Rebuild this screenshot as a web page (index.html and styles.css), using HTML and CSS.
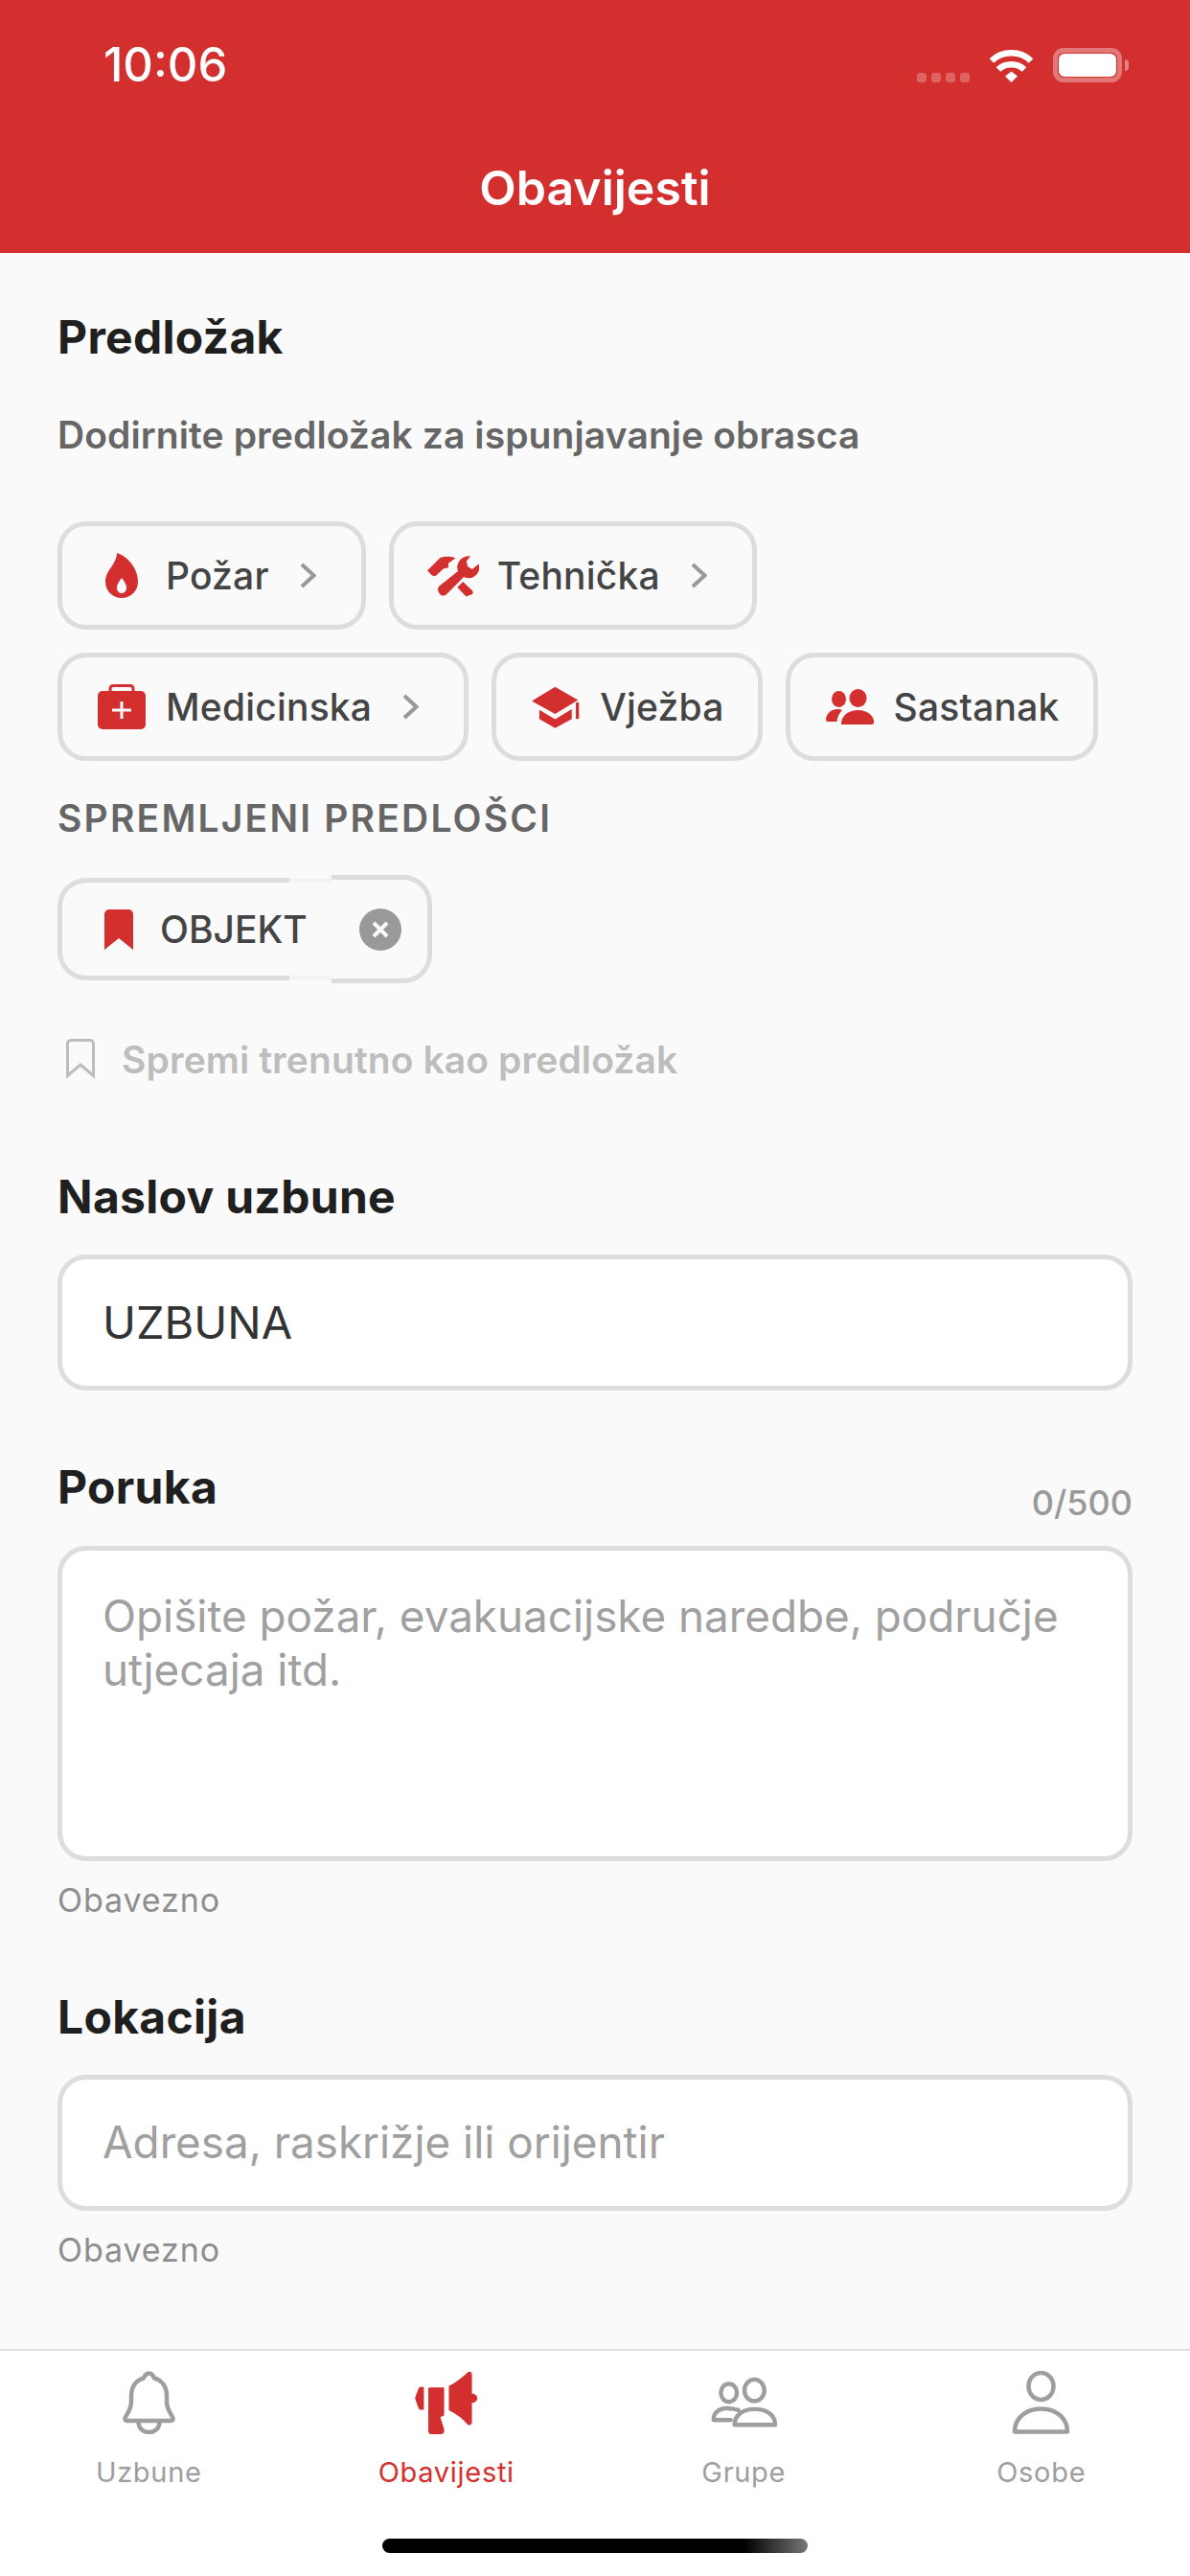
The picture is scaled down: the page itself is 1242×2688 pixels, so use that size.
FILE: index.html
```html
<!DOCTYPE html>
<html lang="hr">
<head>
  <meta charset="UTF-8">
  <title>Obavijesti</title>
  <meta name="viewport" content="width=device-width, initial-scale=1.0">
  <link rel="stylesheet" href="styles.css">
</head>
<body>

  <div class="screen">

    <header class="header">
      <div class="status-bar">
        <span class="time">10:06</span>
        <div class="status-icons">
          <div class="signal"><i></i><i></i><i></i><i></i></div>
          <svg class="wifi" viewBox="0 0 47 36">
            <path d="M3 13.5C14 2.5 33 2.5 44 13.5" fill="none" stroke="#fff" stroke-width="6.5"/>
            <path d="M10 22.5C17 15.5 30 15.5 37 22.5" fill="none" stroke="#fff" stroke-width="6.5"/>
            <path d="M17 29.5L23.5 24.5L30 29.5L23.5 36Z" fill="#fff"/>
          </svg>
          <div class="battery"><div class="battery-fill"></div></div>
          <div class="battery-cap"></div>
        </div>
      </div>
      <h1 class="title">Obavijesti</h1>
    </header>

    <main class="content">
      <h2 class="heading">Predložak</h2>
      <p class="hint">Dodirnite predložak za ispunjavanje obrasca</p>

      <div class="chips">
        <button class="chip">
          <span class="chip-icon">
            <svg width="34" height="47" viewBox="0 0 34 47">
              <path fill="#d32f2f" fill-rule="evenodd" d="M12 0C22 3 34 15 34 30C34 40 26 47 17 47C8 47 0 40 0 30C0 21 6 16 9 10C11 6 12 3 12 0ZM17 26C14 30 12 33 12 36C12 39.5 14 42 17 42C20 42 22 39.5 22 36C22 33 20 30 17 26Z"/>
            </svg>
          </span>
          <span>Požar</span>
          <svg class="chevron" viewBox="0 0 17 27"><path d="M2 2L14.5 13.5L2 25" /></svg>
        </button>
        <button class="chip">
          <span class="chip-icon">
            <svg width="54" height="44" viewBox="45 22 160 130">
              <path fill="#d32f2f" d="M45 70L85 31C100 26 118 26 132 32L110 48V62L95 64L72 86C68 88 62 88 58 84Z"/>
              <path fill="#d32f2f" d="M138 122L155 105L184 132C187 136 187 140 184 143L172 148C168 151 164 150 161 147Z"/>
              <path fill="#d32f2f" d="M160 28.500A33 33 0 0 0 140 72L82 118C76 124 76 132 82 140C88 150 98 150 104 144L158 90A33 33 0 0 0 204 50L184 66L170 58L166 42L178 26C172 25 166 26 160 28.500Z"/>
            </svg>
          </span>
          <span>Tehnička</span>
          <svg class="chevron" viewBox="0 0 17 27"><path d="M2 2L14.5 13.5L2 25" /></svg>
        </button>
        <button class="chip">
          <span class="chip-icon">
            <svg width="50" height="47" viewBox="0 0 50 47">
              <path fill="none" stroke="#d32f2f" stroke-width="3" d="M13 9V4.500A3 3 0 0 1 16 1.500H34A3 3 0 0 1 37 4.500V9"/>
              <rect y="7" width="50" height="40" rx="5" fill="#d32f2f"/>
              <path fill="none" stroke="#fafafa" stroke-width="3" d="M25 18V36M15 27H35"/>
            </svg>
          </span>
          <span>Medicinska</span>
          <svg class="chevron" viewBox="0 0 17 27"><path d="M2 2L14.5 13.5L2 25" /></svg>
        </button>
        <button class="chip">
          <span class="chip-icon">
            <svg width="50" height="44" viewBox="38 28 152 134">
              <path fill="#d32f2f" d="M38 75L112 30L185 72L112 116Z"/>
              <path fill="#d32f2f" d="M62 103L112 133L165 101V132L112 161L62 132Z"/>
              <rect x="178" y="80" width="10" height="52" fill="#d32f2f"/>
            </svg>
          </span>
          <span>Vježba</span>
        </button>
        <button class="chip">
          <span class="chip-icon">
            <svg width="50" height="37" viewBox="0 0 50 37">
              <ellipse cx="13.500" cy="10.500" rx="7.500" ry="8.500" fill="#d32f2f"/>
              <ellipse cx="33.500" cy="9.500" rx="9" ry="9.500" fill="#d32f2f"/>
              <path fill="#d32f2f" d="M17 37C15.500 37 16 35 16.500 33C18 27 24 22 33.500 22C43 22 49 27 50 33C50.500 35 50 37 48 37Z"/>
              <path fill="#d32f2f" d="M2 34C0.500 34 0 33 0 31C1 25 6 21 12 21C14 21 16 21.500 17 22C14 25 12 29 11.500 34Z"/>
            </svg>
          </span>
          <span>Sastanak</span>
        </button>
      </div>

      <h3 class="section-label">SPREMLJENI PREDLOŠCI</h3>

      <div class="saved-chip">
        <div class="saved-main">
          <svg width="30" height="42" viewBox="0 0 30 42">
            <path fill="#d32f2f" d="M5 0H25A5 5 0 0 1 30 5V42L15 30L0 42V5A5 5 0 0 1 5 0Z"/>
          </svg>
          <span>OBJEKT</span>
        </div>
        <div class="saved-close">
          <svg width="44" height="44" viewBox="0 0 44 44">
            <circle cx="22" cy="22" r="22" fill="#999"/>
            <path d="M15 15L29 29M29 15L15 29" stroke="#fafafa" stroke-width="4" fill="none"/>
          </svg>
        </div>
      </div>

      <div class="save-row">
        <svg width="30" height="42" viewBox="0 0 30 42">
          <path fill="none" stroke="#bdbdbd" stroke-width="3" d="M5 1.500H25A3.500 3.500 0 0 1 28.500 5V38.500L15 27L1.500 38.500V5A3.500 3.500 0 0 1 5 1.500Z"/>
        </svg>
        <span>Spremi trenutno kao predložak</span>
      </div>

      <h2 class="heading field-title">Naslov uzbune</h2>
      <div class="field">UZBUNA</div>

      <div class="label-row">
        <h2 class="heading">Poruka</h2>
        <span class="counter">0/500</span>
      </div>
      <div class="field field-area placeholder">Opišite požar, evakuacijske naredbe, područje utjecaja itd.</div>
      <p class="required">Obavezno</p>

      <h2 class="heading field-title field-title-tight">Lokacija</h2>
      <div class="field placeholder">Adresa, raskrižje ili orijentir</div>
      <p class="required">Obavezno</p>
    </main>

    <footer class="tabbar">
      <nav class="tabs">
        <div class="tab">
          <svg class="tab-icon" viewBox="0 0 56 66">
            <path d="M28 2.500C25 2.500 23.500 5 22.500 7.500C14 10 9.500 17 9.500 26V32C9.500 39 6 44 3.500 48C2 50 3 52 5 52H51C53 52 54 50 52.500 48C50 44 46.500 39 46.500 32V26C46.500 17 42 10 33.500 7.500C32.500 5 31 2.500 28 2.500Z"/>
            <path d="M17 53C17 60 22 64 28 64C34 64 39 60 39 53"/>
          </svg>
          <span>Uzbune</span>
        </div>
        <div class="tab active">
          <svg class="tab-icon" viewBox="36 24 200 200">
            <path d="M52 75H66V147H52C46 135 42 122 38 110C42 98 46 86 52 75Z"/>
            <path d="M84 76H130V165L118 170L130 208C132 216 128 224 120 224H90C84 224 80 220 80 214V80C80 78 82 76 84 76Z"/>
            <path d="M145 72C170 60 190 42 205 28C212 24 218 28 218 36V95C230 97 235 103 235 110C235 118 228 124 218 125V186C218 194 210 198 204 194C190 175 170 160 145 148Z"/>
          </svg>
          <span>Obavijesti</span>
        </div>
        <div class="tab">
          <svg class="tab-icon" viewBox="0 -7 70 66">
            <ellipse cx="19" cy="15.700" rx="8.500" ry="9.500"/>
            <ellipse cx="46" cy="13" rx="10.500" ry="11.500"/>
            <path d="M25 49.500C25 40 33 33 46.500 33C60 33 68 40 68 49.500Z"/>
            <path d="M21 44.500H3C2 37 9 32 16 32C21 32 24 32.500 29 34"/>
          </svg>
          <span>Grupe</span>
        </div>
        <div class="tab">
          <svg class="tab-icon" viewBox="0 0 61 66">
            <ellipse cx="30.500" cy="16" rx="13" ry="14"/>
            <path d="M3 63.500C3 49 15 39.500 30.500 39.500C46 39.500 58 49 58 63.500Z"/>
          </svg>
          <span>Osobe</span>
        </div>
      </nav>
      <div class="home-bar"></div>
    </footer>

  </div>

</body>
</html>
```

FILE: styles.css
```css
* { margin: 0; padding: 0; box-sizing: border-box; font-family: 'Inter', 'Noto Sans', sans-serif; }
body { background: #fafafa; }

.screen {
  width: 1242px;
  height: 2688px;
  display: flex;
  flex-direction: column;
  overflow: hidden;
}

/* header */
.header {
  height: 264px;
  background: #d32f2f;
  color: white;
  padding-top: 45px;
}

.status-bar {
  display: flex;
  justify-content: space-between;
  align-items: center;
  height: 46px;
  padding: 0 64px 0 108px;
}

.time {
  font-size: 49px;
  font-weight: 500;
  line-height: 46px;
}

.status-icons {
  display: flex;
  align-items: center;
  height: 36px;
}

.signal {
  display: flex;
  gap: 5px;
  align-self: flex-end;
  margin-right: 20px;
}

.signal i {
  display: block;
  width: 10px;
  height: 10px;
  border-radius: 3px;
  background: rgba(255,255,255,0.25);
}

.wifi {
  width: 47px;
  height: 36px;
  margin-right: 20px;
}

.battery {
  width: 72px;
  height: 36px;
  border: 5px solid rgba(255,255,255,0.35);
  border-radius: 11px;
  padding: 1px;
}

.battery-fill {
  height: 100%;
  background: white;
  border-radius: 6px;
}

.battery-cap {
  width: 4px;
  height: 12px;
  margin-left: 3px;
  background: rgba(255,255,255,0.4);
  border-radius: 0 4px 4px 0;
}

.title {
  text-align: center;
  font-size: 50px;
  font-weight: 600;
  line-height: 60px;
  margin-top: 75px;
}

/* form */
.content {
  flex: 1;
  overflow: hidden;
  padding: 58px 60px 0;
}

.heading {
  font-size: 48px;
  font-weight: 700;
  letter-spacing: 0.3px;
  line-height: 60px;
  color: #1f1f1f;
}

.hint {
  font-size: 39px;
  font-weight: 600;
  letter-spacing: 0.1px;
  line-height: 48px;
  color: #666;
  margin-top: 48px;
}

.chips {
  display: flex;
  flex-wrap: wrap;
  gap: 24px;
  margin-top: 66px;
}

.chip {
  display: flex;
  align-items: center;
  height: 113px;
  padding: 0 35px;
  background: #fafafa;
  border: 5px solid #ddd;
  border-radius: 30px;
  font-size: 39px;
  font-weight: 500;
  letter-spacing: 0.2px;
  color: #444;
}

.chip-icon {
  display: flex;
  justify-content: center;
  width: 54px;
  margin-right: 19px;
}

.chevron {
  width: 17px;
  height: 27px;
  margin: 0 12px 0 32px;
  fill: none;
  stroke: #999;
  stroke-width: 4;
}

.section-label {
  font-size: 39px;
  font-weight: 600;
  letter-spacing: 2.2px;
  line-height: 48px;
  color: #666;
  margin-top: 36px;
}

.saved-chip {
  display: flex;
  align-items: center;
  width: 391px;
  height: 113px;
  margin-top: 35px;
}

.saved-main {
  position: relative;
  display: flex;
  align-items: center;
  gap: 28px;
  width: 286px;
  height: 107px;
  padding-left: 44px;
  border: 5px solid #ddd;
  border-right: none;
  border-radius: 30px 0 0 30px;
  font-size: 39px;
  font-weight: 500;
  color: #444;
}

/* lighter piece of the border where the two parts of the chip meet */
.saved-main::after {
  content: "";
  position: absolute;
  top: -5px;
  right: 0;
  bottom: -5px;
  width: 44px;
  border-top: 5px solid #f3f3f3;
  border-bottom: 5px solid #f3f3f3;
}

.saved-close {
  display: flex;
  align-items: center;
  width: 105px;
  height: 113px;
  padding-left: 29px;
  border: 5px solid #ddd;
  border-left: none;
  border-radius: 0 30px 30px 0;
}

.save-row {
  display: flex;
  align-items: center;
  gap: 28px;
  height: 48px;
  margin-top: 55px;
  padding-left: 9px;
  font-size: 39px;
  font-weight: 600;
  letter-spacing: 0.1px;
  color: #bdbdbd;
}

.field-title { margin-top: 90px; }
.field-title-tight { margin-top: 72px; }

.field {
  height: 142px;
  margin-top: 30px;
  padding: 0 42px;
  background: white;
  border: 5px solid #ddd;
  border-radius: 30px;
  font-size: 47px;
  line-height: 132px;
  color: #333;
}

.placeholder {
  font-size: 45.8px;
  color: #a0a0a0;
}

.field-area {
  height: 329px;
  padding-top: 41px;
  line-height: 56px;
}

.label-row {
  display: flex;
  justify-content: space-between;
  margin-top: 71px;
}

.counter {
  font-size: 36px;
  font-weight: 500;
  line-height: 30px;
  color: #999;
  margin-top: 31px;
}

.label-row + .field { margin-top: 30px; }

.required {
  font-size: 34px;
  line-height: 40px;
  letter-spacing: 0.9px;
  color: #8e8e8e;
  margin-top: 21px;
}

/* tab bar */
.tabbar {
  background: white;
  border-top: 2px solid #ddd;
  padding-top: 21px;
}

.tabs {
  display: grid;
  grid-template-columns: repeat(4, 1fr);
}

.tab {
  display: flex;
  flex-direction: column;
  align-items: center;
  gap: 20px;
  font-size: 29px;
  line-height: 40px;
  letter-spacing: 0.7px;
  color: #9e9e9e;
}

.tab-icon {
  width: 69px;
  height: 66px;
  fill: none;
  stroke: #9e9e9e;
  stroke-width: 4.5;
  stroke-linejoin: round;
  stroke-linecap: round;
}

.tab.active { color: #d32f2f; }

.tab.active .tab-icon {
  fill: #d32f2f;
  stroke: none;
}

.home-bar {
  width: 444px;
  height: 15px;
  margin: 49px auto 24px;
  border-radius: 8px;
  background: linear-gradient(90deg, #000 0, #000 85%, #777 100%);
}
```
